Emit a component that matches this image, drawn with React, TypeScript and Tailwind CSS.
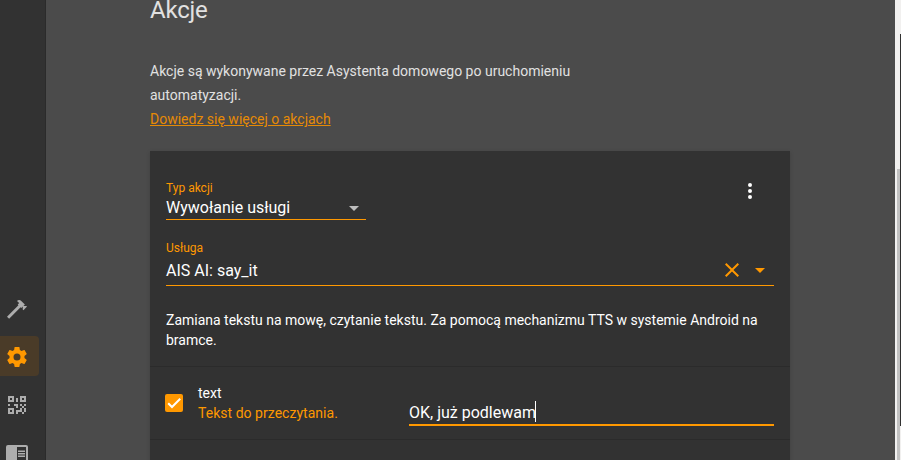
import type { ReactNode } from "react";

const hammer =
  "M2 19.63L13.43 8.2L12.72 7.5L14.14 6.07L12 3.89C13.2 2.7 15.09 2.7 16.27 3.89L19.87 7.5L18.45 8.91H21.29L22 9.62L18.45 13.21L17.74 12.5V9.62L16.27 11.04L15.56 10.33L4.13 21.77L2 19.63Z";
const cog =
  "M12,15.5A3.5,3.5 0 0,1 8.5,12A3.5,3.5 0 0,1 12,8.5A3.5,3.5 0 0,1 15.5,12A3.5,3.5 0 0,1 12,15.5M19.43,12.97C19.47,12.65 19.5,12.33 19.5,12C19.5,11.67 19.47,11.34 19.43,11L21.54,9.37C21.73,9.22 21.78,8.95 21.66,8.73L19.66,5.27C19.54,5.05 19.27,4.96 19.05,5.05L16.56,6.05C16.04,5.66 15.5,5.32 14.87,5.07L14.5,2.42C14.46,2.18 14.25,2 14,2H10C9.75,2 9.54,2.18 9.5,2.42L9.13,5.07C8.5,5.32 7.96,5.66 7.44,6.05L4.95,5.05C4.73,4.96 4.46,5.05 4.34,5.27L2.34,8.73C2.21,8.95 2.27,9.22 2.46,9.37L4.57,11C4.53,11.34 4.5,11.67 4.5,12C4.5,12.33 4.53,12.65 4.57,12.97L2.46,14.63C2.27,14.78 2.21,15.05 2.34,15.27L4.34,18.73C4.46,18.95 4.73,19.03 4.95,18.95L7.44,17.94C7.96,18.34 8.5,18.68 9.13,18.93L9.5,21.58C9.54,21.82 9.75,22 10,22H14C14.25,22 14.46,21.82 14.5,21.58L14.87,18.93C15.5,18.67 16.04,18.34 16.56,17.94L19.05,18.95C19.27,19.03 19.54,18.95 19.66,18.73L21.66,15.27C21.78,15.05 21.73,14.78 21.54,14.63L19.43,12.97Z";
const qrcode =
  "M3,11H5V13H3V11M11,5H13V9H11V5M9,11H13V15H11V13H9V11M15,11H17V13H19V11H21V13H19V15H21V19H19V21H17V19H13V21H11V17H15V15H17V13H15V11M19,19V15H17V19H19M15,3H21V9H15V3M17,5V7H19V5H17M3,3H9V9H3V3M5,5V7H7V5H5M3,15H9V21H3V15M5,17V19H7V17H5Z";
const bookOpen =
  "M13,12H20V13.5H13M13,9.5H20V11H13M13,14.5H20V16H13M21,4H3A2,2 0 0,0 1,6V19A2,2 0 0,0 3,21H21A2,2 0 0,0 23,19V6A2,2 0 0,0 21,4M21,19H12V6H21";
const menuDown = "M7,10L12,15L17,10H7Z";
const close =
  "M19,6.41L17.59,5L12,10.59L6.41,5L5,6.41L10.59,12L5,17.59L6.41,19L12,13.41L17.59,19L19,17.59L13.41,12L19,6.41Z";
const dotsVertical =
  "M12,16A2,2 0 0,1 14,18A2,2 0 0,1 12,20A2,2 0 0,1 10,18A2,2 0 0,1 12,16M12,10A2,2 0 0,1 14,12A2,2 0 0,1 12,14A2,2 0 0,1 10,12A2,2 0 0,1 12,10M12,4A2,2 0 0,1 14,6A2,2 0 0,1 12,8A2,2 0 0,1 10,6A2,2 0 0,1 12,4Z";

function Icon({ path, className = "" }: { path: string; className?: string }) {
  return (
    <svg viewBox="0 0 24 24" className={`size-6 shrink-0 fill-current ${className}`}>
      <path d={path} />
    </svg>
  );
}

function NavItem({ path, active = false }: { path: string; active?: boolean }) {
  return (
    <div
      className={`flex h-10 w-[39px] shrink-0 items-center rounded-r pt-0.5 pl-[5px] ${
        active ? "bg-[#4a3b28] text-[#ff9800]" : "text-[#adadad]"
      }`}
    >
      <Icon path={path} />
    </div>
  );
}

function Label({ children }: { children: ReactNode }) {
  return <div className="text-xs leading-5 text-[#ff9800]">{children}</div>;
}

export default function App() {
  return (
    <div className="flex h-[460px] w-[901px] overflow-hidden bg-[#4b4b4b] font-['Roboto',sans-serif] text-sm text-white">
      <nav className="flex w-[46px] shrink-0 flex-col gap-2 border-r border-[#2b2b2b] bg-[#323232] pt-[288px]">
        <NavItem path={hammer} />
        <NavItem path={cog} active />
        <NavItem path={qrcode} />
        <NavItem path={bookOpen} />
      </nav>

      <main className="flex min-w-0 flex-1 flex-col pl-[104px]">
        <h1 className="h-5 text-2xl leading-5 tracking-[-0.2px] text-[#e1e1e1]">Akcje</h1>
        <p className="mt-[39px] w-[430px] leading-6 text-[#e1e1e1]">
          Akcje są wykonywane przez Asystenta domowego po uruchomieniu automatyzacji.
        </p>
        <a className="leading-6 text-[#e68a05] underline">Dowiedz się więcej o akcjach</a>

        <section className="mt-5 h-[320px] w-[640px] shrink-0 bg-[#323232] shadow-[0_1px_4px_rgba(0,0,0,0.15)]">
          <div className="flex h-[69px] justify-between px-4 pt-[27px]">
            <div className="h-[42px] w-[200px] border-b border-[#ff9800]">
              <Label>Typ akcji</Label>
              <div className="-mt-0.5 flex h-[23px] items-center justify-between text-base">
                <span>Wywołanie usługi</span>
                <Icon path={menuDown} className="text-[#bdbdbd]" />
              </div>
            </div>
            <Icon path={dotsVertical} className="mt-px mr-3" />
          </div>

          <div className="mx-4 mt-[18px] h-[48px] border-b border-[#ff9800]">
            <Label>Usługa</Label>
            <div className="flex h-6 items-center text-base">
              <span className="flex-1 pt-0.5">AIS AI: say_it</span>
              <Icon path={close} className="mr-1 text-[#ff9800]" />
              <Icon path={menuDown} className="mr-0.5 text-[#ff9800]" />
            </div>
          </div>

          <p className="mt-6 h-14 px-4 leading-5">
            Zamiana tekstu na mowę, czytanie tekstu. Za pomocą mechanizmu TTS w systemie Android na
            bramce.
          </p>

          <div className="flex h-[74px] items-start border-y border-[#2b2b2b] px-4">
            <div className="-ml-px mt-[27px] flex size-[18px] items-center justify-center rounded-xs bg-[#ff9800]">
              <svg viewBox="0 0 18 18" className="size-[18px] fill-none stroke-white stroke-2">
                <path d="M3.2 9.2L7 13L15.2 4.8" />
              </svg>
            </div>
            <div className="ml-[15px] mt-4 w-[211px] leading-5">
              <div>text</div>
              <div className="tracking-[0.03px] text-[#ff9800]">Tekst do przeczytania.</div>
            </div>
            <div className="mt-[33px] flex h-[26px] flex-1 items-center border-b-2 border-[#ff9800] text-base">
              <span className="pt-0.5">OK, już podlewam</span>
              <span className="-mt-0.5 -ml-px h-[21px] w-px bg-white" />
            </div>
          </div>
        </section>
      </main>

      <div className="flex w-1.5 shrink-0 bg-[#f1f0ef]">
        <div className="mt-[169px] ml-0.5 w-[3px] bg-[#c1c1c1]" />
        <div className="mt-[34px] h-[392px] w-px bg-[#323232]" />
      </div>
    </div>
  );
}
